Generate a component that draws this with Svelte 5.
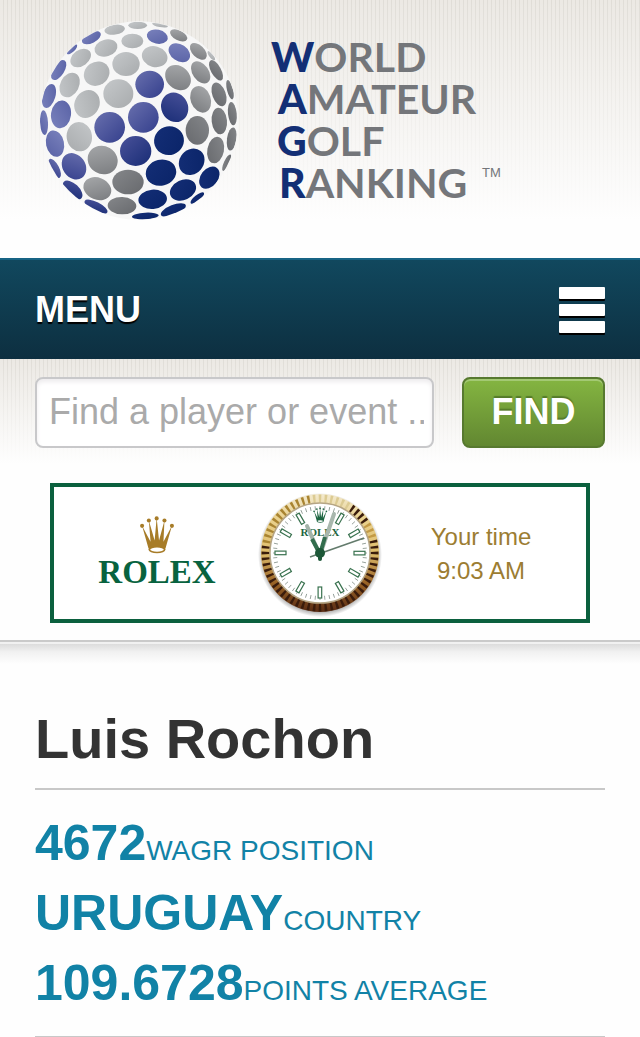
<script>
  // Dimples of the ball: [cx, cy, rx, ry, rotation, tone]
  const dimples = [
    [254, 59, 31, 15, -8, 'g1'], [323, 46, 28, 11, 0, 'g1'], [390, 45, 24, 6, 10, 'g1'],
    [184, 83, 31, 16, -27, 'b1'], [307, 93, 33, 22, 0, 'g1'], [382, 80, 32, 21, 12, 'b1'],
    [446, 76, 28, 15, 27, 'g2'], [126, 118, 20, 8, -43, 'b1'], [152, 144, 34, 24, -36, 'g1'],
    [228, 114, 35, 25, -16, 'g1'], [448, 128, 35, 25, 34, 'b1'], [505, 124, 31, 18, 44, 'g2'],
    [544, 137, 17, 6, 52, 'g1'], [86, 180, 34, 17, -58, 'b1'], [288, 162, 41, 36, 0, 'g1'],
    [374, 140, 39, 31, 15, 'g1'], [512, 187, 37, 24, 55, 'g2'], [558, 181, 34, 15, 61, 'g3'],
    [119, 225, 39, 28, -63, 'g1'], [200, 191, 40, 35, -35, 'g1'], [359, 223, 43, 41, 0, 'b2'],
    [444, 203, 42, 34, 42, 'g2'], [57, 258, 37, 19, -73, 'b1'], [171, 282, 43, 37, -62, 'g1'],
    [265, 251, 45, 43, 0, 'g1'], [512, 268, 41, 30, 70, 'g2'], [567, 253, 37, 20, 70, 'g3'],
    [600, 239, 30, 9, 76, 'g3'], [93, 313, 42, 30, -83, 'b1'], [340, 322, 46, 46, 0, 'b2'],
    [434, 292, 45, 40, 65, 'b3'], [42, 338, 37, 12, 87, 'b1'], [239, 352, 46, 46, 0, 'b2'],
    [568, 333, 40, 23, 84, 'g3'], [607, 311, 35, 13, 84, 'g3'], [148, 380, 44, 38, 82, 'g1'],
    [502, 361, 43, 35, 90, 'g3'], [75, 401, 40, 27, 78, 'b1'], [417, 392, 45, 43, -20, 'b4'],
    [317, 423, 47, 45, 0, 'b3'], [605, 387, 35, 14, 98, 'g3'], [557, 420, 40, 25, 101, 'g3'],
    [218, 450, 46, 42, 30, 'g2'], [132, 469, 42, 34, 55, 'b2'], [485, 455, 42, 36, -50, 'b4'],
    [74, 475, 32, 13, 62, 'b2'], [590, 458, 27, 8, -65, 'g3'], [393, 488, 46, 39, -14, 'b4'],
    [538, 503, 37, 26, -52, 'b4'], [294, 516, 47, 37, 0, 'g3'], [202, 536, 43, 33, 22, 'g2'],
    [128, 540, 36, 19, 43, 'b3'], [459, 540, 41, 30, -25, 'b4'], [276, 587, 43, 26, 2, 'g3'],
    [368, 568, 43, 29, -5, 'b4'], [198, 590, 38, 14, 27, 'b3'], [502, 564, 25, 9, -38, 'b4'],
    [430, 600, 40, 15, -22, 'b4'], [346, 618, 40, 10, -3, 'b4']
  ];

  const marks = [1, 2, 3, 4, 5, 6, 7, 8, 9, 10, 11].map((n) => n * 30);
  const minutes = Array.from({ length: 60 }, (_, i) => i * 6);

  // Bezel flutes catch the light at the top and darken towards the bottom
  const flutes = Array.from({ length: 60 }, (_, i) => {
    const turn = i * 6;
    let tone = '#3a1c0c';
    if (turn < 36 || turn > 348) tone = '#dccb93';
    else if (turn > 276) tone = '#a98431';
    else if (turn > 54 && turn < 78) tone = '#c39a45';
    return { turn, tone };
  });

  const stats = [
    { value: '4672', label: 'WAGR POSITION' },
    { value: 'URUGUAY', label: 'COUNTRY' },
    { value: '109.6728', label: 'POINTS AVERAGE' }
  ];
  let query = $state('');
</script>

{#snippet crown()}
  <path d="M22 45 L47 92 L42 29 L59 88 L65 22 L72 88 L88 29 L85 92 L110 45 L91 112 Q66 130 41 112Z" />
  <circle cx="22" cy="45" r="6" /><circle cx="42" cy="29" r="6" /><circle cx="65" cy="23" r="6" />
  <circle cx="88" cy="29" r="6" /><circle cx="110" cy="45" r="6" />
  <ellipse cx="66" cy="115" rx="25" ry="11" />
  <ellipse cx="66" cy="115" rx="20" ry="6" fill="#fff" />
{/snippet}

<header class="masthead">
  <a class="brand" href="#home" aria-label="World Amateur Golf Ranking">
    <svg class="ball" viewBox="0 0 660 660" aria-hidden="true">
      <defs>
        <linearGradient id="g1" x1="0" y1="0" x2="1" y2="1"><stop offset="0" stop-color="#c5c8ca" /><stop offset="1" stop-color="#a8abad" /></linearGradient>
        <linearGradient id="g2" x1="0" y1="0" x2="1" y2="1"><stop offset="0" stop-color="#a9abad" /><stop offset="1" stop-color="#77797c" /></linearGradient>
        <linearGradient id="g3" x1="0" y1="0" x2="1" y2="1"><stop offset="0" stop-color="#85878a" /><stop offset="1" stop-color="#67696d" /></linearGradient>
        <linearGradient id="b1" x1="0" y1="0" x2="1" y2="1"><stop offset="0" stop-color="#7b83bd" /><stop offset="1" stop-color="#5861a5" /></linearGradient>
        <linearGradient id="b2" x1="0" y1="0" x2="1" y2="1"><stop offset="0" stop-color="#6970ae" /><stop offset="1" stop-color="#343f8c" /></linearGradient>
        <linearGradient id="b3" x1="0" y1="0" x2="1" y2="1"><stop offset="0" stop-color="#4a529a" /><stop offset="1" stop-color="#182c75" /></linearGradient>
        <linearGradient id="b4" x1="0" y1="0" x2="1" y2="1"><stop offset="0" stop-color="#142e76" /><stop offset="1" stop-color="#0a2468" /></linearGradient>
        <clipPath id="sphere"><circle cx="327" cy="332" r="297" /></clipPath>
      </defs>
      <circle cx="327" cy="332" r="298" fill="#f7f7f7" />
      <g clip-path="url(#sphere)">
        {#each dimples as [x, y, rx, ry, turn, tone]}
          <ellipse cx={x} cy={y} {rx} {ry} transform="rotate({turn} {x} {y})" fill="url(#{tone})" />
        {/each}
      </g>
    </svg>
    <svg class="wordmark" viewBox="0 0 240 180">
      <text x="1" y="42"><tspan>W</tspan>ORLD</text>
      <text x="8" y="84"><tspan>A</tspan>MATEUR</text>
      <text x="7" y="126"><tspan>G</tspan>OLF</text>
      <text x="9" y="168"><tspan>R</tspan>ANKING</text>
      <text class="tm" x="212" y="147">TM</text>
    </svg>
  </a>
</header>

<nav class="menu">
  <span>MENU</span>
  <button class="burger" type="button" aria-label="Open menu"><i></i><i></i><i></i></button>
</nav>

<section class="tools">
  <form class="search" onsubmit={(e) => e.preventDefault()}>
    <input type="text" aria-label="Find a player or event" placeholder="Find a player or event ..." bind:value={query} />
    <button type="submit">FIND</button>
  </form>

  <a class="sponsor" href="#rolex">
    <span class="rolex">
      <svg class="crown" viewBox="10 16 112 112" fill="#a77c28" aria-hidden="true">{@render crown()}</svg>
      <span>ROLEX</span>
    </span>
    <svg class="clock" viewBox="0 0 128 128" aria-hidden="true">
      <defs>
        <linearGradient id="gold" x1="0" y1="0" x2="0" y2="1">
          <stop offset="0" stop-color="#f3ead0" /><stop offset=".2" stop-color="#ead28f" /><stop offset=".5" stop-color="#dfbd6c" />
          <stop offset=".75" stop-color="#9a6426" /><stop offset="1" stop-color="#5a2c14" />
        </linearGradient>
        <radialGradient id="shade"><stop offset=".88" stop-color="#444" stop-opacity=".6" /><stop offset="1" stop-color="#444" stop-opacity="0" /></radialGradient>
      </defs>
      <circle cx="64" cy="66" r="62" fill="url(#shade)" />
      <circle cx="64" cy="64" r="59" fill="url(#gold)" />
      {#each flutes as { turn, tone }}
        <path d="M62.600 5.500h2.800l-.4 8h-2z" fill={tone} transform="rotate({turn} 64 64)" />
      {/each}
      <circle cx="64" cy="64" r="50" fill="#fff" stroke="#b5a585" stroke-width="1.500" />
      {#each minutes as turn}
        <path d="M64 17v4" stroke="#87938c" stroke-width=".8" transform="rotate({turn} 64 64)" />
      {/each}
      {#each marks as turn}
        <rect x="62.300" y="19" width="3.600" height="11" fill="#fff" stroke="#39724f" stroke-width="1.200" transform="rotate({turn} 64 64)" />
      {/each}
      <g fill="#1d6541" transform="translate(55 16) scale(.14)">{@render crown()}</g>
      <text x="64" y="47" text-anchor="middle">ROLEX</text>
      <path d="M64 66 L51 37" stroke="#a3b3a8" stroke-width="4" stroke-linecap="round" />
      <path d="M64 66 L78 25" stroke="#a8b7ad" stroke-width="4" stroke-linecap="round" />
      <path d="M64 65 L56 50 M64 65 L69 48" stroke="#326d4d" stroke-width="4" />
      <path d="M54 68 L108 49" stroke="#637b6c" stroke-width="1.600" />
      <circle cx="64" cy="64" r="5" fill="#1d5838" />
      <path d="M64 64v6" stroke="#1d5838" stroke-width="4" stroke-linecap="round" />
    </svg>
    <span class="time">Your time<br />9:03 AM</span>
  </a>
</section>

<main>
  <h1>Luis Rochon</h1>
  <ul>
    {#each stats as { value, label }}
      <li><strong>{value}</strong><span>{label}</span></li>
    {/each}
  </ul>
</main>

<style>
  :global(body) {
    margin: 0;
    background: #fefefe;
    font-family: "Liberation Sans", Arial, sans-serif;
  }
  .masthead, .tools {
    background:
      linear-gradient(rgba(254, 254, 254, 0), #fefefe var(--fade)),
      repeating-linear-gradient(90deg, #ece9e4 0 3px, #e0ddd7 3px 4px);
  }
  .masthead {
    --fade: 220px;
    padding: 10px 30px 28px;
  }
  .brand {
    display: flex;
    align-items: center;
    gap: 20px;
    text-decoration: none;
  }
  .ball { width: 220px; height: 220px; flex: none; }
  .wordmark {
    width: 240px;
    height: 180px;
    flex: none;
    font: 700 41px Lato, sans-serif;
    fill: #74767a;
  }
  .wordmark tspan { fill: #132f75; font-weight: 900; }
  .wordmark .tm { font: 400 13px "Liberation Sans", sans-serif; }

  .menu {
    display: flex;
    align-items: center;
    justify-content: space-between;
    box-sizing: border-box;
    height: 101px;
    padding: 0 35px;
    border-top: 2px solid #176384;
    background: linear-gradient(#11485e, #0d2f40);
    color: #fff;
    font-size: 36px;
    font-weight: 700;
    text-shadow: 0 2px 1px #000;
  }
  .burger {
    display: grid;
    gap: 5px;
    width: 46px;
    padding: 0;
    border: 0;
    background: none;
  }
  .burger i { height: 12px; background: #fff; box-shadow: 0 2px #000; border-radius: 1px; }

  .tools {
    --fade: 105px;
    padding: 18px 35px 17px;
    border-bottom: 2px solid #cacaca;
  }
  .search { display: flex; gap: 28px; }
  .search input, .search button {
    box-sizing: border-box;
    height: 71px;
    border-radius: 8px;
    font-family: inherit;
    font-size: 36px;
  }
  .search input {
    flex: 1;
    min-width: 0;
    padding: 0 8px 2px 12px;
    border: 2px solid #c8c8ca;
    background: #fff;
    box-shadow: inset 0 3px 4px #eeecee;
    color: #333;
  }
  .search input::placeholder { color: #aaa; opacity: 1; }
  .search button {
    width: 143px;
    padding: 0 0 2px;
    border: 2px solid #57792f;
    background: linear-gradient(#84b541, #628731);
    box-shadow: inset 0 2px #a3c973;
    color: #fff;
    font-weight: 700;
    text-shadow: 0 -2px 1px #557b2a;
  }
  .sponsor {
    display: grid;
    grid-template-columns: 1fr 128px 1fr;
    align-items: center;
    justify-items: center;
    box-sizing: border-box;
    height: 140px;
    margin: 35px 15px 0;
    border: 4px solid #0b603e;
    background: #fff;
    text-decoration: none;
  }
  .rolex {
    display: grid;
    justify-items: center;
    padding-left: 4px;
    color: #08633f;
    font: 700 33px/36px "Liberation Serif", serif;
  }
  .crown { width: 38px; height: 38px; }
  .clock { width: 128px; height: 128px; }
  .clock text { font: 700 11px "Liberation Serif", serif; fill: #1d6541; }
  .time {
    padding: 2px 8px 0 0;
    color: #9c7d32;
    font-size: 24px;
    line-height: 34px;
    text-align: center;
  }

  main {
    padding: 0 35px;
    background: linear-gradient(#f1f1f1 2px, #dcdcdc 2px, #f1f1f1 10px, #fefefe 22px);
  }
  h1 {
    margin: 0;
    padding: 64px 0 16px;
    border-bottom: 2px solid #c8c8c8;
    color: #333;
    font-size: 56px;
    line-height: 66px;
  }
  ul {
    margin: 0;
    padding: 28px 0 8px;
    border-bottom: 1px solid #c8c8c8;
    list-style: none;
  }
  li {
    display: flex;
    align-items: baseline;
    height: 70px;
    color: #1182a6;
    font-size: 28px;
    line-height: 50px;
  }
  strong { font-size: 50px; }
</style>
